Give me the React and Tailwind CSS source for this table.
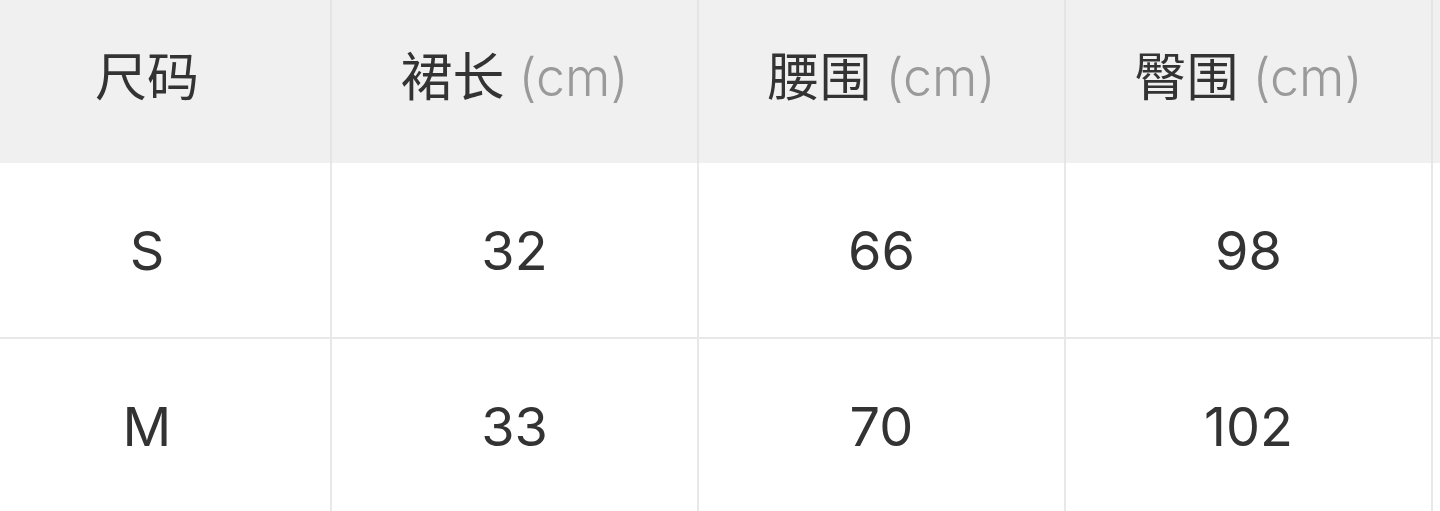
const COLUMNS = [
  { name: '尺码' },
  { name: '裙长', unit: '(cm)' },
  { name: '腰围', unit: '(cm)' },
  { name: '臀围', unit: '(cm)' },
]

const ROWS = [
  ['S', '32', '66', '98'],
  ['M', '33', '70', '102'],
]

const FONT = { fontFamily: 'Inter, "Noto Sans CJK SC", sans-serif' }

export default function App() {
  return (
    <div className="w-[1440px] h-[511px] overflow-hidden bg-white text-[#333333]" style={FONT}>
      {/* header */}
      <div className="grid grid-cols-[332px_367px_367px_367px_1fr] h-[163px] bg-[#f0f0f0]">
        {COLUMNS.map((c, i) => (
          <div
            key={c.name}
            className={`flex items-center justify-center gap-[14px] border-r-2 border-[#e4e4e4] pb-[8px] text-[52px] leading-none ${i === 0 ? 'pr-[36px]' : ''}`}
          >
            <span>{c.name}</span>
            {c.unit && <span className="text-[#9a9a9a] font-light">{c.unit}</span>}
          </div>
        ))}
        <div />
      </div>

      {/* body rows */}
      {ROWS.map((row) => (
        <div
          key={row[0]}
          className="grid grid-cols-[332px_367px_367px_367px_1fr] h-[176px] border-b-2 border-[#e8e8e8]"
        >
          {row.map((v, i) => (
            <div
              key={i}
              className={`flex items-center justify-center border-r-2 border-[#e8e8e8] pt-[2px] text-[54px] leading-none ${i === 0 ? 'pr-[36px]' : ''}`}
            >
              {v}
            </div>
          ))}
          <div />
        </div>
      ))}
    </div>
  )
}
